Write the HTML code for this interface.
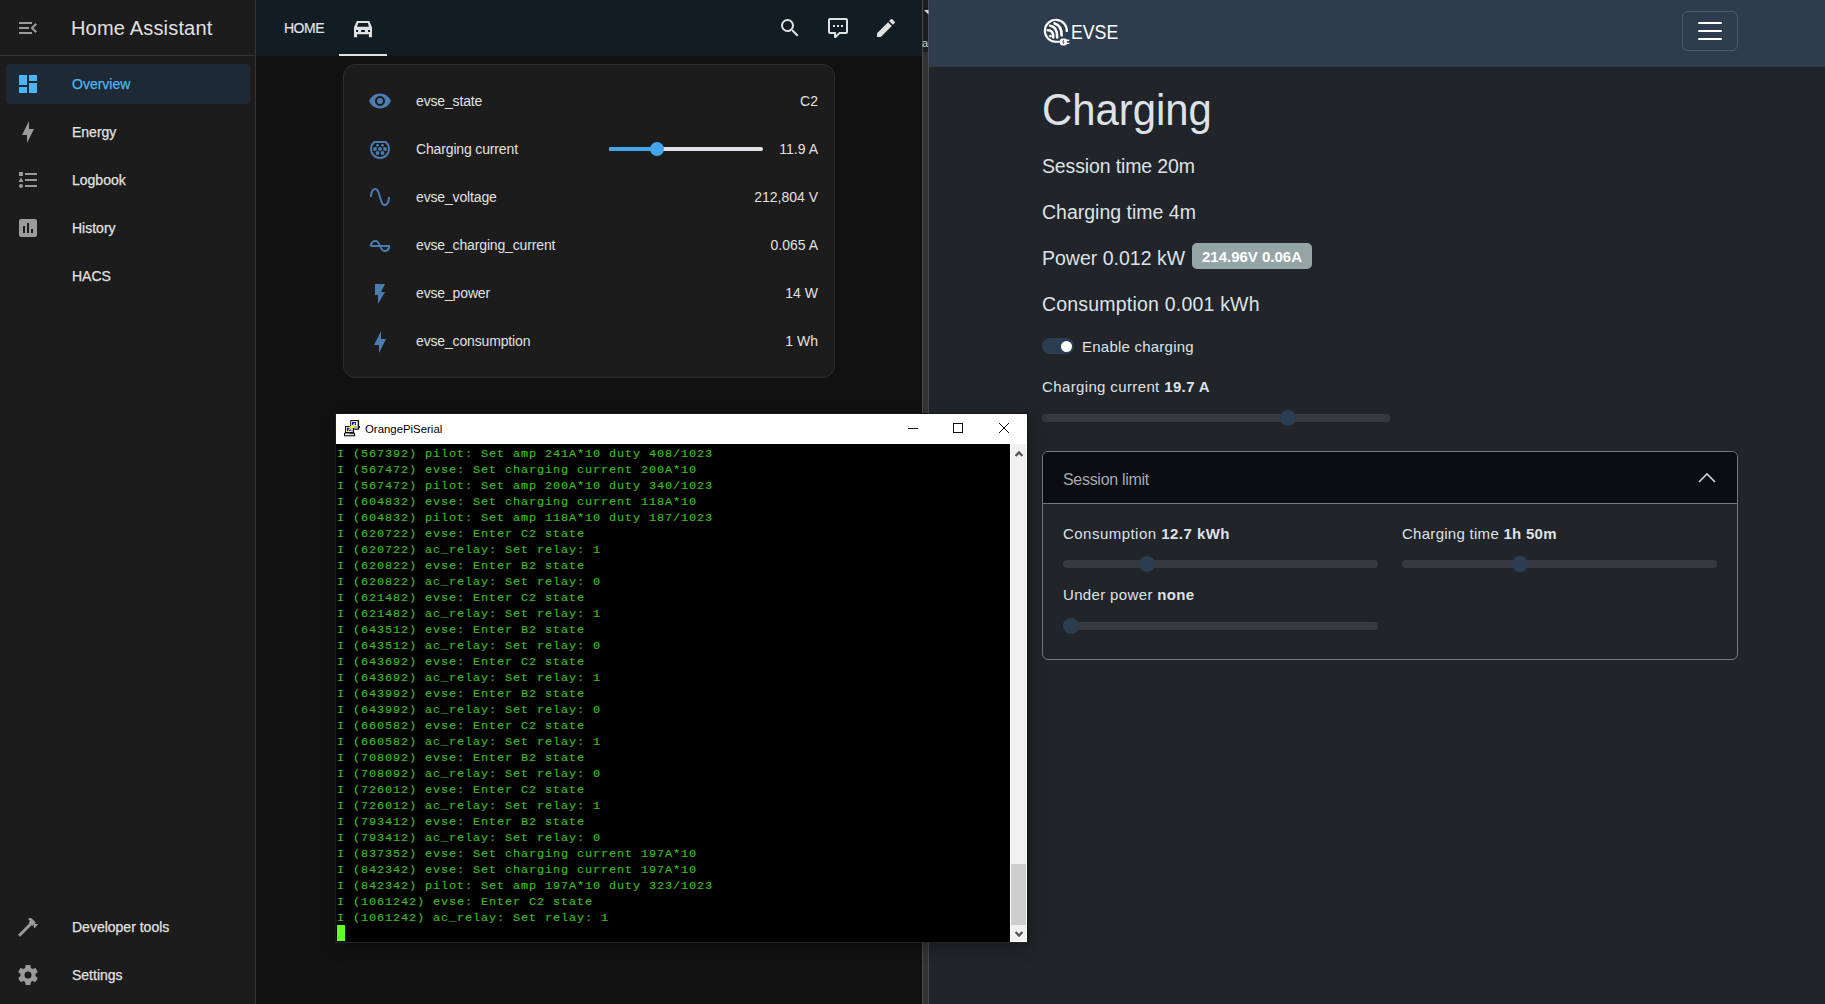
<!DOCTYPE html>
<html><head><meta charset="utf-8">
<style>
*{margin:0;padding:0;box-sizing:border-box}
html,body{width:1825px;height:1004px;overflow:hidden;background:#111;font-family:"Liberation Sans",sans-serif}
.a{position:absolute}
/* sidebar */
#sb{left:0;top:0;width:256px;height:1004px;background:#1c1c1c;border-right:1px solid #343434}
#sb .hdr{left:0;top:0;width:255px;height:56px;border-bottom:1px solid #343434}
#sb .title{left:71px;top:17px;font-size:20px;color:#e1e1e1;white-space:nowrap}
.sel{left:6px;top:64px;width:244px;height:40px;border-radius:4px;background:#1e2a33}
.item{left:72px;font-size:14px;color:#e1e1e1;white-space:nowrap;-webkit-text-stroke:0.25px #e1e1e1}
.ico{position:absolute;width:24px;height:24px}
/* HA main */
#hh{left:256px;top:0;width:666px;height:56px;background:#121d23}
#hm{left:256px;top:56px;width:666px;height:948px;background:#111}
.card{left:343px;top:64px;width:492px;height:314px;border:1px solid #2e2e2e;border-radius:12px;background:#1c1c1c}
.rl{left:416px;font-size:14px;color:#e1e1e1;white-space:nowrap;letter-spacing:-0.15px}
.rv{right:1007px;font-size:14px;color:#e1e1e1;white-space:nowrap;text-align:right}
/* strip */
#strip{left:922px;top:0;width:7px;height:1004px;background:#333;border-left:1px solid #4a4a4a;border-right:1px solid #4a4a4a}
/* evse */
#ev{left:929px;top:0;width:896px;height:1004px;background:#212529}
#nav{left:929px;top:0;width:896px;height:67px;background:#2e3d4e}
.evt{color:#dee2e6;white-space:nowrap}
/* terminal */
#term{left:335px;top:413px;width:693px;height:530px;background:#fff;border:1px solid #141516;border-left-color:#1c1c1c;border-bottom-color:#232323;box-shadow:2px 4px 16px rgba(0,0,0,0.3)}
#tt{left:336px;top:414px;width:690px;height:30px;background:#fff}
#tc{left:336px;top:444px;width:674px;height:498px;background:#000;overflow:hidden}
#tc pre{font-family:"Liberation Mono",monospace;font-size:11.8px;letter-spacing:0.92px;line-height:16px;color:#40ba26;-webkit-text-stroke:0.2px #40ba26;margin-left:1px;margin-top:2px}
#tsb{left:1011px;top:444px;width:15px;height:497px;background:#f0f0f0}
</style></head><body>

<!-- Sidebar -->
<div id="sb" class="a">
  <div class="hdr a"></div>
  <svg class="ico" style="left:16px;top:16px" viewBox="0 0 24 24"><path fill="#9b9b9b" d="M21,15.61L19.59,17L14.58,12L19.59,7L21,8.39L17.44,12L21,15.61M3,6H16V8H3V6M3,13V11H13V13H3M3,18V16H16V18H3Z"/></svg>
  <div class="title a" style="letter-spacing:0.18px">Home Assistant</div>
  <div class="sel a"></div>
  <svg class="ico" style="left:16px;top:72px" viewBox="0 0 24 24"><path fill="#4fb3f6" d="M13,3V9H21V3M13,21H21V11H13M3,21H11V15H3M3,13H11V3H3V13Z"/></svg>
  <div class="item a" style="top:76px;color:#4fb3f6;-webkit-text-stroke:0.25px #4fb3f6">Overview</div>
  <svg class="ico" style="left:16px;top:120px" viewBox="0 0 24 24"><path fill="#9b9b9b" d="M11 15H6L13 1V9H18L11 23V15Z"/></svg>
  <div class="item a" style="top:124px">Energy</div>
  <svg class="ico" style="left:16px;top:168px" viewBox="0 0 24 24"><path fill="#9b9b9b" d="M5,9.5L7.5,14H2.5L5,9.5M3,4H7V8H3V4M5,20A2,2 0 0,0 7,18A2,2 0 0,0 5,16A2,2 0 0,0 3,18A2,2 0 0,0 5,20M9,5V7H21V5H9M9,19H21V17H9V19M9,13H21V11H9V13Z"/></svg>
  <div class="item a" style="top:172px">Logbook</div>
  <svg class="ico" style="left:16px;top:216px" viewBox="0 0 24 24"><path fill="#9b9b9b" d="M19,3H5A2,2 0 0,0 3,5V19A2,2 0 0,0 5,21H19A2,2 0 0,0 21,19V5A2,2 0 0,0 19,3M9,17H7V10H9V17M13,17H11V7H13V17M17,17H15V13H17V17Z"/></svg>
  <div class="item a" style="top:220px">History</div>
  <div class="item a" style="top:268px">HACS</div>
  <svg class="ico" style="left:16px;top:915px" viewBox="0 0 24 24"><path fill="#9b9b9b" d="M2 19.63L13.43 8.2L12.72 7.5L14.14 6.07L12 3.89C13.2 2.7 15.09 2.7 16.27 3.89L19.87 7.5L18.45 8.91H21.29L22 9.62L18.45 13.21L17.74 12.5V9.62L16.27 11.04L15.56 10.33L4.13 21.76L2 19.63Z"/></svg>
  <div class="item a" style="top:919px">Developer tools</div>
  <svg class="ico" style="left:16px;top:963px" viewBox="0 0 24 24"><path fill="#9b9b9b" d="M12,15.5A3.5,3.5 0 0,1 8.5,12A3.5,3.5 0 0,1 12,8.5A3.5,3.5 0 0,1 15.5,12A3.5,3.5 0 0,1 12,15.5M19.43,12.97C19.47,12.65 19.5,12.33 19.5,12C19.5,11.67 19.47,11.34 19.43,11L21.54,9.37C21.73,9.22 21.78,8.95 21.66,8.73L19.66,5.27C19.54,5.05 19.27,4.96 19.05,5.05L16.56,6.05C16.04,5.66 15.5,5.32 14.87,5.07L14.5,2.42C14.46,2.18 14.25,2 14,2H10C9.75,2 9.54,2.18 9.5,2.42L9.13,5.07C8.5,5.32 7.96,5.66 7.44,6.05L4.95,5.05C4.73,4.96 4.46,5.05 4.34,5.27L2.34,8.73C2.21,8.95 2.27,9.22 2.46,9.37L4.57,11C4.53,11.34 4.5,11.67 4.5,12C4.5,12.33 4.53,12.65 4.57,12.97L2.46,14.63C2.27,14.78 2.21,15.05 2.34,15.27L4.34,18.73C4.46,18.95 4.73,19.03 4.95,18.95L7.44,17.94C7.96,18.34 8.5,18.68 9.13,18.93L9.5,21.58C9.54,21.82 9.75,22 10,22H14C14.25,22 14.46,21.82 14.5,21.58L14.87,18.93C15.5,18.67 16.04,18.34 16.56,17.94L19.05,18.95C19.27,19.03 19.54,18.95 19.66,18.73L21.66,15.27C21.78,15.05 21.73,14.78 21.54,14.63L19.43,12.97Z"/></svg>
  <div class="item a" style="top:967px">Settings</div>
</div>

<!-- HA main -->
<div id="hh" class="a"></div>
<div id="hm" class="a"></div>
<div class="a" style="left:284px;top:20px;font-size:14px;color:#e1e1e1;-webkit-text-stroke:0.2px #e1e1e1;letter-spacing:-0.5px">HOME</div>
<svg class="a" style="left:354px;top:21px" width="18" height="17" viewBox="0 0 18 17"><path fill="#e1e1e1" fill-rule="evenodd" d="M2.8,0H15.3L18,6.2V16.3H14.9V13.3H3.1V16.3H0V6.2Z M4.3,2H13.9L14.9,5.8H3Z M2.1,9H4V10.9H2.1Z M7.1,9H10.9V10.9H7.1Z M14,9H16V10.9H14Z"/></svg>
<div class="a" style="left:339px;top:54px;width:48px;height:2px;background:#e1e1e1"></div>
<svg class="ico" style="left:778px;top:16px" viewBox="0 0 24 24"><path fill="#e1e1e1" d="M9.5,3A6.5,6.5 0 0,1 16,9.5C16,11.11 15.41,12.59 14.44,13.73L14.71,14H15.5L20.5,19L19,20.5L14,15.5V14.71L13.73,14.44C12.59,15.41 11.11,16 9.5,16A6.5,6.5 0 0,1 3,9.5A6.5,6.5 0 0,1 9.5,3M9.5,5C7,5 5,7 5,9.5C5,12 7,14 9.5,14C12,14 14,12 14,9.5C14,7 12,5 9.5,5Z"/></svg>
<svg class="ico" style="left:826px;top:16px" viewBox="0 0 24 24"><path fill="#e1e1e1" d="M9,22A1,1 0 0,1 8,21V18H4A2,2 0 0,1 2,16V4C2,2.89 2.9,2 4,2H20A2,2 0 0,1 22,4V16A2,2 0 0,1 20,18H13.9L10.2,21.71C10,21.9 9.75,22 9.5,22V22H9M10,16V19.08L13.08,16H20V4H4V16H10M17,11H15V9H17V11M13,11H11V9H13V11M9,11H7V9H9V11Z"/></svg>
<svg class="ico" style="left:874px;top:16px" viewBox="0 0 24 24"><path fill="#e1e1e1" d="M20.71,7.04C21.1,6.65 21.1,6 20.71,5.63L18.37,3.29C18,2.9 17.35,2.9 16.96,3.29L15.12,5.12L18.87,8.87M3,17.25V21H6.75L17.81,9.93L14.06,6.18L3,17.25Z"/></svg>
<div class="card a"></div>
<svg class="ico" style="left:368px;top:89px" viewBox="0 0 24 24"><path fill="#4a7cb0" d="M12,9A3,3 0 0,0 9,12A3,3 0 0,0 12,15A3,3 0 0,0 15,12A3,3 0 0,0 12,9M12,17A5,5 0 0,1 7,12A5,5 0 0,1 12,7A5,5 0 0,1 17,12A5,5 0 0,1 12,17M12,4.5C7,4.5 2.73,7.61 1,12C2.73,16.39 7,19.5 12,19.5C17,19.5 21.27,16.39 23,12C21.27,7.61 17,4.5 12,4.5Z"/></svg>
<div class="rl a" style="top:93px">evse_state</div><div class="rv a" style="top:93px">C2</div>
<svg class="ico" style="left:368px;top:137px" viewBox="0 0 24 24"><g fill="#4a7cb0"><path fill-rule="evenodd" d="M6,4H18A10,10 0 1 1 6,4Z M6.7,6A8,8 0 1 0 17.3,6Z"/><circle cx="9.5" cy="8.3" r="1.4"/><circle cx="14.5" cy="8.3" r="1.4"/><circle cx="7" cy="12" r="1.9"/><circle cx="12" cy="12" r="1.9"/><circle cx="17" cy="12" r="1.9"/><circle cx="9.5" cy="16" r="1.9"/><circle cx="14.5" cy="16" r="1.9"/></g></svg>
<div class="rl a" style="top:141px">Charging current</div><div class="rv a" style="top:141px">11.9 A</div>
<div class="a" style="left:609px;top:147px;width:154px;height:4px;border-radius:2px;background:#e3e0e8"></div>
<div class="a" style="left:609px;top:147px;width:48px;height:4px;border-radius:2px;background:#43a5ee"></div>
<div class="a" style="left:650px;top:142px;width:14px;height:14px;border-radius:50%;background:#43a5ee"></div>
<svg class="ico" style="left:368px;top:185px" viewBox="0 0 24 24"><path fill="#4a7cb0" d="M16.5,21C13.5,21 12.31,16.76 11.05,12.28C10.14,9.04 9,5 7.5,5C4.11,5 4,11.93 4,12H2C2,11.63 2.06,3 7.5,3C10.5,3 11.71,7.25 12.97,11.74C13.83,14.8 15,19 16.5,19C19.94,19 20.03,12.07 20.03,12H22.03C22.03,12.37 21.97,21 16.5,21Z"/></svg>
<div class="rl a" style="top:189px">evse_voltage</div><div class="rv a" style="top:189px">212,804 V</div>
<svg class="ico" style="left:368px;top:233px" viewBox="0 0 24 24"><path fill="none" stroke="#4a7cb0" stroke-width="2" d="M2.5,13H22 M2.5,13C3.5,9 6,8 7.5,8C10,8 11,10.5 12,13C13,15.5 14,18 16.5,18C19,18 21,16 21.5,13"/></svg>
<div class="rl a" style="top:237px">evse_charging_current</div><div class="rv a" style="top:237px">0.065 A</div>
<svg class="ico" style="left:368px;top:282px" viewBox="0 0 24 24"><path fill="#4a7cb0" d="M7,2V13H10V22L17,10H13L17,2H7Z"/></svg>
<div class="rl a" style="top:285px">evse_power</div><div class="rv a" style="top:285px">14 W</div>
<svg class="ico" style="left:368px;top:330px" viewBox="0 0 24 24"><path fill="#4a7cb0" d="M11 15H6L13 1V9H18L11 23V15Z"/></svg>
<div class="rl a" style="top:333px">evse_consumption</div><div class="rv a" style="top:333px">1 Wh</div>

<!-- strip -->
<div id="strip" class="a"></div>
<div class="a" style="left:923px;top:0;width:5px;height:52px;background:#1c1c1c"></div>
<svg class="a" style="left:924px;top:9px" width="5" height="6" viewBox="0 0 5 6"><path d="M0,1 H4.5 V5.5Z" fill="#d8d8d8"/></svg>
<div class="a" style="left:922px;top:37px;width:6px;height:12px;overflow:hidden"><div class="a" style="left:0;top:0;font-size:11px;color:#d0d0d0;white-space:nowrap">al</div></div>

<!-- EVSE -->
<div id="ev" class="a"></div>
<div id="nav" class="a"></div>
<svg class="a" style="left:1040px;top:15px" width="35" height="35" viewBox="0 0 35 35"><g fill="none" stroke="#fff" stroke-linecap="round">
<path stroke-width="2.1" stroke-linecap="butt" d="M26.8,17 A11,11 0 1 0 15.9,26.8 H21"/>
<path stroke-width="2.6" d="M7.8,15.2 Q13.6,15.3 13.2,22.4"/>
<path stroke-width="2.6" d="M10.2,10.8 Q17.4,11.8 17.2,22.4"/>
<path stroke-width="2.6" d="M14.6,8.4 Q21.8,10.4 21.6,20.4"/>
</g><circle cx="10.4" cy="21.1" r="1.4" fill="#fff"/>
<rect x="20" y="23.4" width="7" height="7" rx="2.2" fill="#fff"/><rect x="26" y="24.6" width="3.3" height="1.4" fill="#fff"/><rect x="26" y="27.6" width="3.3" height="1.4" fill="#fff"/>
<path d="M23.8,24.8 L22.6,27 H24 L23,29.2" stroke="#2e3d4e" stroke-width="0.8" fill="none"/></svg>
<div class="a" style="left:1070.5px;top:20.7px;font-size:20px;color:#fff;white-space:nowrap;transform:scaleX(0.885);transform-origin:0 0">EVSE</div>
<div class="a" style="left:1682px;top:11px;width:56px;height:40px;border:1px solid rgba(255,255,255,0.15);border-radius:6px"></div>
<div class="a" style="left:1698px;top:21.5px;width:24px;height:2.4px;background:#fff;border-radius:1px"></div>
<div class="a" style="left:1698px;top:29.6px;width:24px;height:2.4px;background:#fff;border-radius:1px"></div>
<div class="a" style="left:1698px;top:37.7px;width:24px;height:2.4px;background:#fff;border-radius:1px"></div>
<div class="a evt" style="left:1042px;top:84px;font-size:45px;transform:scaleX(0.93);transform-origin:0 0">Charging</div>
<div class="a evt" style="left:1042px;top:155px;font-size:19.5px;letter-spacing:-0.14px">Session time 20m</div>
<div class="a evt" style="left:1042px;top:201px;font-size:19.5px">Charging time 4m</div>
<div class="a evt" style="left:1042px;top:247px;font-size:19.5px">Power 0.012 kW</div>
<div class="a" style="left:1192px;top:243px;width:120px;height:26px;border-radius:5px;background:#95a5a6"></div>
<div class="a" style="left:1192px;top:248px;width:120px;text-align:center;font-size:15px;font-weight:bold;color:#fff;white-space:nowrap">214.96V 0.06A</div>
<div class="a evt" style="left:1042px;top:293px;font-size:19.5px;letter-spacing:0.2px">Consumption 0.001 kWh</div>
<div class="a" style="left:1042px;top:338px;width:32px;height:16px;border-radius:8px;background:#2b3d50"></div>
<div class="a" style="left:1060.5px;top:340.5px;width:11px;height:11px;border-radius:50%;background:#fff"></div>
<div class="a evt" style="left:1082px;top:338px;font-size:15px;letter-spacing:0.23px">Enable charging</div>
<div class="a evt" style="left:1042px;top:378px;font-size:15px;letter-spacing:0.37px">Charging current <b>19.7 A</b></div>
<div class="a" style="left:1042px;top:414px;width:348px;height:8px;border-radius:4px;background:#343a40"></div>
<div class="a" style="left:1280px;top:410px;width:16px;height:16px;border-radius:50%;background:#2b3d50"></div>
<div class="a" style="left:1042px;top:451px;width:696px;height:209px;border:1px solid #737b7e;border-radius:6px;overflow:hidden">
  <div class="a" style="left:0;top:0;width:694px;height:52px;background:#0b0d10;border-bottom:1px solid #737b7e"></div>
</div>
<div class="a" style="left:1063px;top:471px;font-size:16px;color:#a4aab0;white-space:nowrap;letter-spacing:-0.3px">Session limit</div>
<svg class="a" style="left:1697px;top:470px" width="20" height="16" viewBox="0 0 20 16"><path d="M2,12 L10,4 L18,12" fill="none" stroke="#cfd3d7" stroke-width="1.6"/></svg>
<div class="a evt" style="left:1063px;top:525px;font-size:15px;letter-spacing:0.47px">Consumption <b>12.7 kWh</b></div>
<div class="a" style="left:1063px;top:560px;width:315px;height:8px;border-radius:4px;background:#343a40"></div>
<div class="a" style="left:1139px;top:556px;width:16px;height:16px;border-radius:50%;background:#2b3d50"></div>
<div class="a evt" style="left:1402px;top:525px;font-size:15px;letter-spacing:0.28px">Charging time <b>1h 50m</b></div>
<div class="a" style="left:1402px;top:560px;width:315px;height:8px;border-radius:4px;background:#343a40"></div>
<div class="a" style="left:1512px;top:556px;width:16px;height:16px;border-radius:50%;background:#2b3d50"></div>
<div class="a evt" style="left:1063px;top:586px;font-size:15px;letter-spacing:0.35px">Under power <b>none</b></div>
<div class="a" style="left:1063px;top:622px;width:315px;height:8px;border-radius:4px;background:#343a40"></div>
<div class="a" style="left:1063px;top:618px;width:16px;height:16px;border-radius:50%;background:#2b3d50"></div>

<!-- terminal -->
<div id="term" class="a"></div>
<div id="tt" class="a"></div>
<svg class="a" style="left:340px;top:417px" width="22" height="22" viewBox="0 0 22 22">
<rect x="10.8" y="3.6" width="7.8" height="8.6" fill="#b8b8b8" stroke="#000" stroke-width="1"/><rect x="11.4" y="4.2" width="5.5" height="4.5" fill="#f4f4f4"/><rect x="12" y="5" width="4" height="3" fill="#0000f0"/>
<rect x="18.8" y="9" width="1.2" height="1.8" fill="#000"/>
<rect x="5.6" y="9.6" width="7.8" height="6" fill="#b8b8b8" stroke="#000" stroke-width="1"/><rect x="6.2" y="10.2" width="5" height="4.6" fill="#f4f4f4"/><rect x="7" y="10.8" width="3.7" height="3.2" fill="#0000f0"/>
<rect x="4.6" y="16.2" width="10" height="2.6" fill="#d0d0d0" stroke="#000" stroke-width="1"/><rect x="5.2" y="16.6" width="4.5" height="1.2" fill="#fff"/>
<path d="M8.3,13.6 L15,6.3" stroke="#f8f030" stroke-width="1.3"/><path d="M8.2,10.6 L11.5,8.6 L15.2,9.6 L12.3,11.8Z" fill="#f8f030"/></svg>
<div class="a" style="left:365px;top:422.5px;font-size:11.4px;color:#000;white-space:nowrap">OrangePiSerial</div>
<svg class="a" style="left:900px;top:414px" width="126" height="30" viewBox="0 0 126 30"><g stroke="#111" stroke-width="1" fill="none">
<path d="M8,14.5H18"/><rect x="53.5" y="9.5" width="9" height="9"/><path d="M99,9L109,19M109,9L99,19"/></g></svg>
<div id="tc" class="a"><pre>I (567392) pilot: Set amp 241A*10 duty 408/1023
I (567472) evse: Set charging current 200A*10
I (567472) pilot: Set amp 200A*10 duty 340/1023
I (604832) evse: Set charging current 118A*10
I (604832) pilot: Set amp 118A*10 duty 187/1023
I (620722) evse: Enter C2 state
I (620722) ac_relay: Set relay: 1
I (620822) evse: Enter B2 state
I (620822) ac_relay: Set relay: 0
I (621482) evse: Enter C2 state
I (621482) ac_relay: Set relay: 1
I (643512) evse: Enter B2 state
I (643512) ac_relay: Set relay: 0
I (643692) evse: Enter C2 state
I (643692) ac_relay: Set relay: 1
I (643992) evse: Enter B2 state
I (643992) ac_relay: Set relay: 0
I (660582) evse: Enter C2 state
I (660582) ac_relay: Set relay: 1
I (708092) evse: Enter B2 state
I (708092) ac_relay: Set relay: 0
I (726012) evse: Enter C2 state
I (726012) ac_relay: Set relay: 1
I (793412) evse: Enter B2 state
I (793412) ac_relay: Set relay: 0
I (837352) evse: Set charging current 197A*10
I (842342) evse: Set charging current 197A*10
I (842342) pilot: Set amp 197A*10 duty 323/1023
I (1061242) evse: Enter C2 state
I (1061242) ac_relay: Set relay: 1</pre><div class="a" style="left:1px;top:481px;width:8px;height:16px;background:#60ff2a"></div></div>
<div id="tsb" class="a">
<svg class="a" style="left:3.5px;top:5.5px" width="8" height="7" viewBox="0 0 8 7"><path d="M0.6,6 L4,2.4 L7.4,6" stroke="#555" stroke-width="2.2" fill="none"/></svg>
<div class="a" style="left:0px;top:420px;width:15px;height:61px;background:#cdcdcd"></div>
<svg class="a" style="left:3.5px;top:486.5px" width="8" height="7" viewBox="0 0 8 7"><path d="M0.6,1 L4,4.6 L7.4,1" stroke="#555" stroke-width="2.2" fill="none"/></svg>
</div>
</body></html>
